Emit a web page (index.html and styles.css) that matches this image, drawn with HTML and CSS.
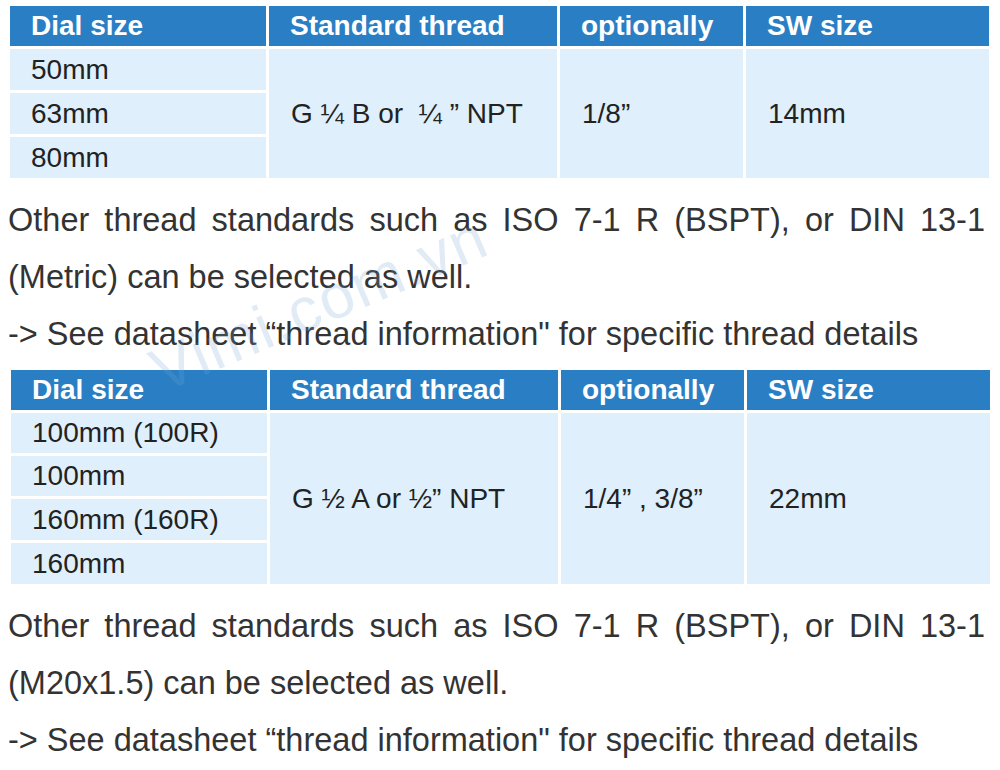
FILE: index.html
```html
<!DOCTYPE html>
<html>
<head>
<meta charset="utf-8">
<link rel="stylesheet" href="styles.css">
</head>
<body>
<div class="page">
  <table class="spec spec-a">
    <colgroup><col class="c1"><col class="c2"><col class="c3"><col class="c4"></colgroup>
    <thead>
      <tr><th>Dial size</th><th>Standard thread</th><th>optionally</th><th>SW size</th></tr>
    </thead>
    <tbody>
      <tr><td>50mm</td><td rowspan="3">G ¼ B or &nbsp;¼ ” NPT</td><td rowspan="3">1/8”</td><td rowspan="3">14mm</td></tr>
      <tr><td>63mm</td></tr>
      <tr><td>80mm</td></tr>
    </tbody>
  </table>
  <div class="note">
    <span class="jline">Other thread standards such as ISO 7-1 R (BSPT), or DIN 13-1</span>
    <span class="line">(Metric) can be selected as well.</span>
    <span class="line">-&gt; See datasheet “thread information" for specific thread details</span>
  </div>
  <table class="spec spec-b">
    <colgroup><col class="c1"><col class="c2"><col class="c3"><col class="c4"></colgroup>
    <thead>
      <tr><th>Dial size</th><th>Standard thread</th><th>optionally</th><th>SW size</th></tr>
    </thead>
    <tbody>
      <tr><td>100mm (100R)</td><td rowspan="4">G ½ A or ½” NPT</td><td rowspan="4">1/4” , 3/8”</td><td rowspan="4">22mm</td></tr>
      <tr><td>100mm</td></tr>
      <tr class="tall"><td>160mm (160R)</td></tr>
      <tr class="tall"><td>160mm</td></tr>
    </tbody>
  </table>
  <div class="note">
    <span class="jline">Other thread standards such as ISO 7-1 R (BSPT), or DIN 13-1</span>
    <span class="line">(M20x1.5) can be selected as well.</span>
    <span class="line">-&gt; See datasheet “thread information" for specific thread details</span>
  </div>
  <div class="watermark">Vimi.com.vn</div>
</div>
</body>
</html>
```
FILE: styles.css
```css
html, body {
  margin: 0;
  padding: 0;
  background: #ffffff;
}
.page {
  position: relative;
  width: 1000px;
  height: 770px;
  overflow: hidden;
  padding-top: 3px;
  box-sizing: border-box;
  font-family: "Liberation Sans", Arial, sans-serif;
}
.spec {
  border-collapse: separate;
  border-spacing: 3px;
  margin-left: 7px;
  table-layout: fixed;
  width: 985px;
}
.spec-b { margin-left: 8px; }
.c1 { width: 256px; }
.c2 { width: 288px; }
.c3 { width: 183px; }
.c4 { width: 243px; }
.spec th {
  background: #2a7fc4;
  color: #ffffff;
  font-weight: bold;
  font-size: 28px;
  text-align: left;
  height: 40px;
  padding: 0 0 0 21px;
  box-sizing: border-box;
  line-height: 40px;
  vertical-align: middle;
}
.spec td {
  background: #dfeffb;
  color: #222222;
  font-size: 28px;
  height: 41px;
  padding: 0 0 0 21px;
  line-height: 41px;
  box-sizing: border-box;
  vertical-align: middle;
  white-space: nowrap;
}
.spec-b td {
  height: 40px;
  line-height: 40px;
}
.spec-b .tall td {
  height: 41px;
  line-height: 41px;
}
.spec td[rowspan] { padding-left: 22px; }
.note {
  margin: 11px 0 4px 8px;
  width: 977px;
  font-family: "Liberation Sans Narrow", "Arial Narrow", "Liberation Sans", sans-serif;
  font-stretch: condensed;
  font-size: 32.5px;
  line-height: 57px;
  color: #333333;
}
.note .jline {
  display: block;
  text-align: justify;
  text-align-last: justify;
}
.note .line {
  display: block;
  white-space: nowrap;
}
.watermark {
  position: absolute;
  left: 168px;
  top: 335px;
  font-family: "Liberation Sans", sans-serif;
  font-size: 62px;
  color: rgba(120, 165, 210, 0.22);
  transform: rotate(-23deg);
  transform-origin: left bottom;
  pointer-events: none;
  letter-spacing: 2px;
}
```
